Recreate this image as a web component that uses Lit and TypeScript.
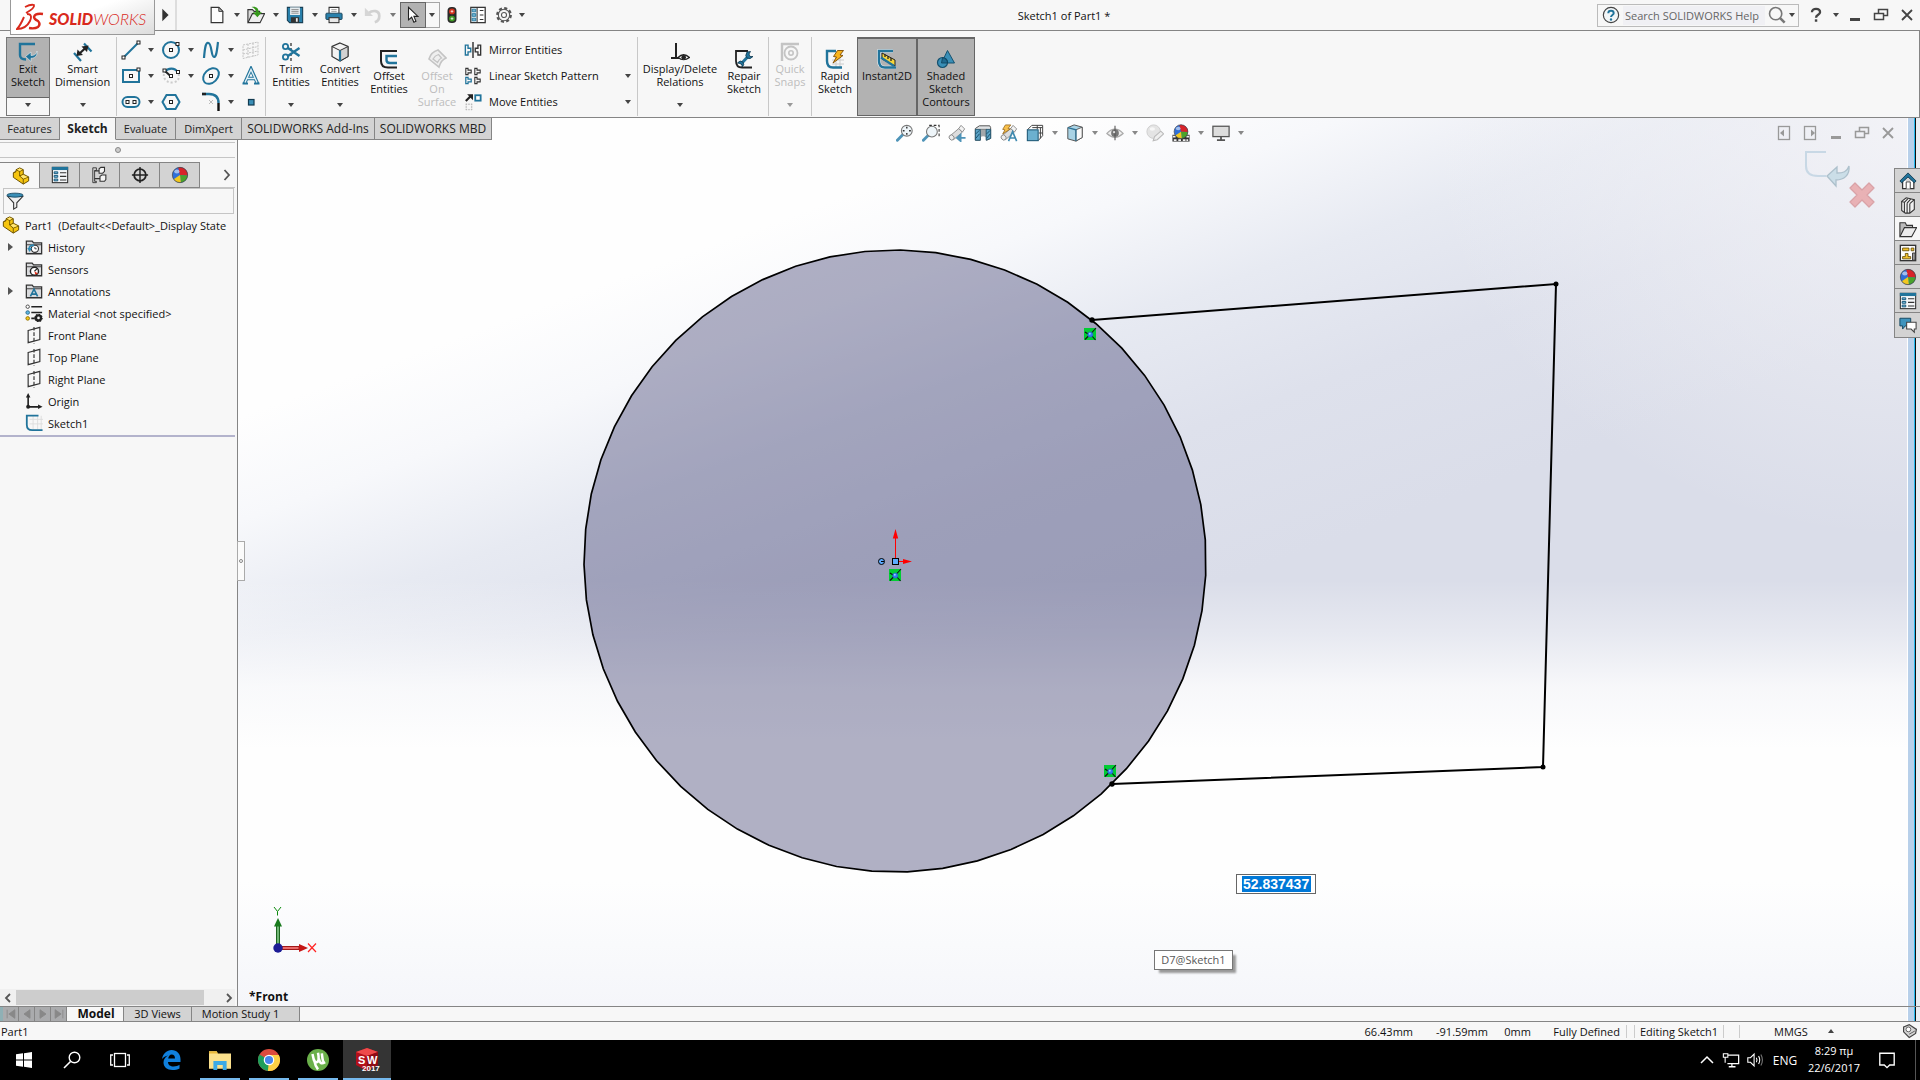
import { LitElement, html, svg, css, nothing } from "lit";
import { customElement, state } from "lit/decorators.js";

/* ---------- icon set, every glyph drawn on a 20 x 20 grid ---------- */

const B = "#21749b";
const K = "#333";

const ball = svg`
  <circle cx="10" cy="10" r="8.5" fill="#2f6fd8"/>
  <path d="M10 10 L8 1.7 A8.5 8.5 0 0 1 18.5 10.5 Z" fill="#d8232a"/>
  <path d="M10 10 L18.5 10.5 A8.5 8.5 0 0 1 11 18.4 Z" fill="#4aa32c"/>
  <path d="M10 10 L11 18.4 A8.5 8.5 0 0 1 3 14.8 Z" fill="#f2c81e"/>
  <ellipse cx="6.5" cy="6" rx="3" ry="2.2" fill="#fff" opacity=".55"/>
  <circle cx="10" cy="10" r="8.5" fill="none" stroke="#444" stroke-width=".8"/>`;

const folder = svg`
  <path d="M1.5 3.5 V17.5 H18.5 V5.5 H9.5 L8 3.5 Z" fill="#d9dadc" stroke="${K}" stroke-width="1.4"/>
  <path d="M2 7.5 H18" stroke="${K}"/>`;

const part = svg`
  <path d="M1.5 11.5 L1.5 6.5 L4.5 5 V3 L8.5 1 L12.5 3 V8 L18.5 11 V15.5 L12.5 19 Z" fill="#f6c50f" stroke="#6b5100" stroke-width="1.1" stroke-linejoin="round"/>
  <path d="M4.5 3 L8.5 5 V10 M8.5 5 L12.500 3 M1.5 6.5 L4.5 5 M8.5 10 L12.5 8 M8.500 10 L12.5 13.500 V19 M12.5 13.5 L18.5 11" fill="none" stroke="#6b5100" stroke-width="1"/>
  <path d="M5.6 3 L8.5 1.700 L11.400 3 L8.5 4.400 Z M9.700 10.200 L12.500 8.800 L17.200 11 L12.700 12.900 Z" fill="#ffe678"/>`;

const plane = svg`
  <path d="M3.5 5 L16.5 1.5 V15 L3.5 18.5 Z" fill="none" stroke="${K}" stroke-width="1.3"/>
  <path d="M10 1 V19.500" stroke="${K}" stroke-width="1.3" stroke-dasharray="4 2"/>`;

const table = svg`
  <rect x="1.5" y="1.5" width="17" height="17" fill="#f4f6f8" stroke="${K}" stroke-width="1.2"/>
  <rect x="1" y="1" width="18" height="3.5" fill="${B}"/>
  <path d="M10 7.5 H17 M10 11.5 H17 M10 15.5 H17" stroke="${K}" stroke-width="1.2"/>
  <path d="M3.5 6.5 h4 v2 h-4z M3.5 10.5 h4 v2 h-4z M3.5 14.5 h4 v2 h-4z" fill="#7fc4e4" stroke="#0f4f73" stroke-width="1"/>`;

const dot = (x: number, y: number) =>
  svg`<rect x="${x - 1.5}" y="${y - 1.5}" width="3" height="3" fill="#fff" stroke="#222" stroke-width="1"/>`;

const scope = svg`
  <path d="M2.5 13 L12 5 L16 9 L6 17.5 Z" fill="#ddd" stroke="#888" stroke-width="1"/>
  <path d="M12 5 L14.5 1.5 L18.5 5.5 L16 9 Z" fill="#f3f3f3" stroke="#888" stroke-width="1"/>
  <ellipse cx="4" cy="15" rx="2.6" ry="3" fill="#eee" stroke="#888" transform="rotate(-40 4 15)"/>`;

const loupe = (cx: number, cy: number) => svg`
  <path d="M${cx - 4} ${cy + 4} L1.5 18" stroke="#4f94b8" stroke-width="3.2" stroke-linecap="round"/>
  <circle cx="${cx}" cy="${cy}" r="6" fill="#eef5f9" stroke="#777" stroke-width="1.2"/>`;

const ICONS: Record<string, unknown> = {
  play: svg`<path d="M7 3 L14 10 L7 17 Z" fill="#333"/>`,
  fresh: svg`<path d="M3.5 1.5 H12 L16.5 6 V18.5 H3.5 Z" fill="#fdfdfd" stroke="${K}" stroke-width="1.3"/><path d="M12 1.5 V6 H16.5 Z" fill="#bbb" stroke="${K}"/>`,
  open: svg`<path d="M1 18 V4 H6 L8 6 H14 V9" fill="#dadada" stroke="${K}" stroke-width="1.2"/><path d="M1 18.5 L6 8.5 H19.5 L14.5 18.5 Z" fill="#eee" stroke="${K}" stroke-width="1.2"/><path d="M5 1 C10 0 13 2 13 7 H16.5 L11.5 12.5 L6.5 7 H10 C10 4 8 2 5 1Z" fill="#35981a"/>`,
  save: svg`<path d="M1.5 1.5 H18.5 V18.5 H4 L1.5 16 Z" fill="#2980ab" stroke="#173f55" stroke-width="1.2"/><rect x="4.5" y="1.5" width="11" height="8.5" fill="#e6ecef"/><path d="M6 4 H14 M6 6 H14 M6 8 H14" stroke="#888"/><rect x="5.5" y="12.5" width="9" height="6" fill="#333"/><rect x="11" y="13.5" width="2" height="4" fill="#eee"/>`,
  print: svg`<path d="M4.5 8 V1.5 H15.5 V8" fill="#fff" stroke="${K}" stroke-width="1.2"/><path d="M7 4 H13 M7 6 H13" stroke="#999"/><rect x="1" y="8" width="18" height="7" rx="1" fill="#2980ab" stroke="#173f55"/><rect x="4.5" y="13" width="11" height="5.5" fill="#e9e9e9" stroke="${K}" stroke-width="1.2"/>`,
  undo: svg`<path d="M5 8 C10 4 17 5 17 11 C17 14 15 17 12 18" fill="none" stroke="#c2c2c2" stroke-width="3"/><path d="M1 2 V11 H10 Z" fill="#c9c9c9"/>`,
  cursor: svg`<path d="M5 1.5 V15.5 L8.5 12.5 L11 18 L13.3 17 L11 11.5 H15.5 Z" fill="#fff" stroke="#222" stroke-width="1.2"/>`,
  traffic: svg`<rect x="5" y="1" width="10" height="18" rx="4.5" fill="#2a2a2a"/><circle cx="10" cy="6" r="3.3" fill="#d4321d"/><circle cx="10" cy="14" r="3.3" fill="#3f9a22"/><path d="M8.5 6 h3 M10 4.5 v3 M8.5 14 h3 M10 12.5 v3" stroke="#fff" stroke-width=".8"/>`,
  options: svg`<rect x="2" y="1.5" width="16" height="17" fill="#fff" stroke="${K}" stroke-width="1.4"/><path d="M9 1.5 V18.5 M12 5 H16 M12 10 H16 M12 15 H16" stroke="${K}" stroke-width="1.2"/><path d="M3.5 3.5 h4 v3 h-4z M3.5 8.5 h4 v3 h-4z M3.5 13.5 h4 v3 h-4z" fill="#74b6d4" stroke="${B}"/>`,
  gear: svg`<circle cx="10" cy="10" r="7.5" fill="none" stroke="#555" stroke-width="2.6" stroke-dasharray="3.4 2.49"/><circle cx="10" cy="10" r="6.3" fill="#f4f4f4" stroke="#555" stroke-width="1.2"/><circle cx="10" cy="10" r="2.8" fill="#fff" stroke="#555" stroke-width="1.2"/>`,
  help: svg`<circle cx="10" cy="10" r="8.5" fill="#f2f6f8" stroke="#444" stroke-width="1.3"/><path d="M7 8 C7 4.5 13 4.5 13 8 C13 10 10 10 10 12.3" fill="none" stroke="${B}" stroke-width="2.2"/><circle cx="10" cy="15" r="1.3" fill="${B}"/>`,
  lens: svg`<circle cx="8.5" cy="8.5" r="6.8" fill="none" stroke="#777" stroke-width="1.8"/><path d="M13.5 13.5 L18.5 18.5" stroke="#777" stroke-width="2.8"/>`,
  query: svg`<path d="M5.5 7 C5.5 2 14.5 2 14.5 7 C14.5 10 10 9.5 10 13" fill="none" stroke="#444" stroke-width="2.6"/><rect x="8.7" y="14.8" width="2.7" height="2.7" fill="#444"/>`,
  min: svg`<rect x="5" y="13" width="10" height="3" fill="currentColor"/>`,
  restore: svg`<path d="M7.5 8 V4.5 H16.5 V10.5 H13" fill="none" stroke="currentColor" stroke-width="1.5"/><rect x="3.5" y="8.5" width="9" height="6" fill="none" stroke="currentColor" stroke-width="1.5"/>`,
  close: svg`<path d="M5 5 L15 15 M15 5 L5 15" stroke="currentColor" stroke-width="1.8"/>`,
  dockL: svg`<rect x="4.5" y="3.5" width="11" height="13" fill="none" stroke="currentColor" stroke-width="1.3"/><path d="M10 6.5 V13.5 L6 10 Z" fill="currentColor"/>`,
  dockR: svg`<rect x="4.5" y="3.5" width="11" height="13" fill="none" stroke="currentColor" stroke-width="1.3"/><path d="M11 6.5 V13.5 L15 10 Z" fill="currentColor"/>`,

  exit: svg`<path d="M17 2 H2 V13 Q2 17.5 8 17.5" fill="none" stroke="${B}" stroke-width="2.4"/><path d="M19 9 C18.5 12.5 16 13.5 13 13.5 V10 L7.5 14.5 L13 19.5 V16.3 C17 16.3 19.8 13.5 19 9Z" fill="${B}" stroke="#e7eef2" stroke-width=".6"/>`,
  smart: svg`<path d="M1 11 L8 19 M11 1.5 L18.5 9.5" stroke="${B}" stroke-width="2.2"/><path d="M6 12 L13 5.5" stroke="#222" stroke-width="2.2"/><path d="M3.5 14 L4.5 7.5 L10 13 Z M15.5 3.5 L14 10 L8.5 4.5 Z" fill="#222"/>`,
  line: svg`<path d="M3 17 L17 3" stroke="${B}" stroke-width="2"/>${dot(2.5, 17.5)}${dot(17.5, 2.5)}`,
  circle: svg`<circle cx="10" cy="10" r="8" fill="none" stroke="${B}" stroke-width="2"/>${dot(10, 10)}${dot(16.5, 4)}`,
  spline: svg`<path d="M3 18 C4 6 5 2 7.5 3 C11 4 10 17 13 17 C15.5 17 16 10 17 2" fill="none" stroke="${B}" stroke-width="2.2"/>`,
  grid: svg`<path d="M2 5 L17 2 V15 L2 18.5 Z M7 4 V17.5 M12 3 V16.5 M2 10 L17 6.5 M2 14 L17 11" fill="none" stroke="#c4c4c4" stroke-width="1" stroke-dasharray="2 1"/>`,
  rect: svg`<rect x="2" y="4" width="16" height="12" fill="none" stroke="${B}" stroke-width="2"/>${dot(10, 10)}${dot(17.5, 3.5)}`,
  arc: svg`<path d="M3 8 A8 7 0 0 0 17 14 A8 8 0 0 0 17.5 8" fill="none" stroke="#ccc" stroke-width="2" stroke-dasharray="2 2"/><path d="M3.5 6 C7 1.5 14 1.5 16.5 6" fill="none" stroke="${B}" stroke-width="2.2"/><path d="M4 5 L10 10.5" stroke="#222" stroke-width="2"/>${dot(3.5, 4.5)}${dot(10, 10)}${dot(17, 6)}`,
  ellipse: svg`<ellipse cx="10" cy="10" rx="9" ry="6.5" fill="none" stroke="${B}" stroke-width="2" transform="rotate(-45 10 10)"/>${dot(10, 10)}`,
  letter: svg`<path d="M3.5 17.5 L10 3 L16.5 17.5 M6 12.5 H14" fill="none" stroke="${B}" stroke-width="3.4"/><path d="M1.5 17.5 H7 M13 17.5 H18.5" stroke="${B}" stroke-width="2"/><path d="M4 16.5 L10 3.5 L16 16.5 M6.5 12.5 H13.5" fill="none" stroke="#e3f0f6" stroke-width="1.4"/>`,
  slot: svg`<rect x="1.5" y="5" width="17" height="10" rx="5" fill="none" stroke="${B}" stroke-width="2"/>${dot(6.5, 10)}${dot(13.5, 10)}`,
  polygon: svg`<path d="M5.5 3 H14.5 L18.5 10 L14.5 17 H5.5 L1.5 10 Z" fill="none" stroke="${B}" stroke-width="2"/>${dot(10, 10)}`,
  fillet: svg`<path d="M1 2 H8 Q17.5 2 17.5 11" fill="none" stroke="${B}" stroke-width="2.4"/><path d="M1 2 H5" stroke="#222" stroke-width="2.4"/><path d="M17.5 11 V19" stroke="#111" stroke-width="2.4"/><path d="M8 8 L12 12 M12 8 L8 12" stroke="#bbb"/>`,
  point: svg`<rect x="7.5" y="7.5" width="5.5" height="5.5" fill="#3a8fb7" stroke="#123a50" stroke-width="1.2"/>`,
  trim: svg`<path d="M10 1 V19" stroke="#222" stroke-width="1.2" stroke-dasharray="3 2"/><path d="M4 4 L18.5 14 M4 16 L18.5 6" stroke="${B}" stroke-width="2.4"/><circle cx="4.5" cy="4.5" r="2.6" fill="#f7f7f7" stroke="${B}" stroke-width="1.8"/><circle cx="4.5" cy="15" r="2.6" fill="#f7f7f7" stroke="${B}" stroke-width="1.8"/>`,
  convert: svg`<path d="M10 1 L18 4.5 V14.5 L10 19 L2 14.5 V4.5 Z" fill="#f3f3f3" stroke="${K}" stroke-width="1.2"/><path d="M10 8.5 L18 4.5 V14.5 L10 19 Z" fill="#d2d2d2" stroke="${K}"/><path d="M2 4.5 L10 8.5" stroke="${K}"/><path d="M10 8.5 V19" stroke="${B}" stroke-width="2.2"/>`,
  offset: svg`<path d="M18 2 H2 V12 Q2 18.5 9 18.5 H18" fill="none" stroke="#222" stroke-width="2"/><path d="M18 7 H7.5 V11 Q7.5 14 11 14 H18" fill="none" stroke="${B}" stroke-width="2.4"/>`,
  surface: svg`<path d="M2 10 Q4 3 11 1 L19 9 Q14 11 12 18 Z" fill="#efefef" stroke="#c4c4c4" stroke-width="1.6"/><path d="M6 10 Q8 6.5 11.5 5.5 L14.5 9 Q12 10 10.5 13.5 Z" fill="none" stroke="#c4c4c4" stroke-width="1.3"/>`,
  mirror: svg`<path d="M10 1 V19" stroke="#222" stroke-width="1.5"/><path d="M1.5 4.5 H4.5 V8 H7.5 V12 H4.5 V15.5 H1.5 Z" fill="none" stroke="${B}" stroke-width="1.5"/><path d="M18.5 4.5 H15.5 V8 H12.5 V12 H15.5 V15.5 H18.5 Z" fill="none" stroke="${K}" stroke-width="1.5"/>`,
  pattern: svg`<path d="M2 1.5 H4.5 V3.5 H8 V6.5 H4.5 V8.5 H2 Z M12 1.5 H14.5 V3.5 H18 V6.5 H14.5 V8.5 H12 Z M12 11.5 H14.5 V13.5 H18 V16.5 H14.5 V18.5 H12 Z" fill="none" stroke="${K}" stroke-width="1.2"/><path d="M2 11.5 H4.5 V13.5 H8 V16.5 H4.5 V18.5 H2 Z" fill="none" stroke="${B}" stroke-width="1.4"/>`,
  move: svg`<path d="M2 9 L7 4" stroke="#222" stroke-width="2.4"/><path d="M3.5 1.5 H10 V8 Z" fill="#222"/><rect x="12.5" y="2.5" width="6" height="6" fill="#fff" stroke="${B}" stroke-width="2"/><path d="M2 12.5 h7 M2 18.5 h7 M2.5 12 v7 M8.5 12 v7" stroke="#bbb" stroke-width="1.5" stroke-dasharray="1.5 1.3"/>`,
  relations: svg`<path d="M6 1 V15" stroke="#222" stroke-width="2"/><path d="M1 16 H10" stroke="#222" stroke-width="2"/><path d="M8 15.5 Q13.5 10 19.5 15.5 Q13.5 20 8 15.5Z" fill="#f4f4f4" stroke="#222" stroke-width="1.2"/><circle cx="13.7" cy="15.3" r="2.3" fill="#222"/>`,
  repair: svg`<path d="M14 2 H2 V12 Q2 18.5 8 18.5 H18" fill="none" stroke="#222" stroke-width="1.8"/><path d="M7 15 L14 7.5" stroke="${B}" stroke-width="3"/><path d="M13 3 Q10.5 7 13 9 Q16 11 19 7.5 L16 7.5 L15 5 L16.5 2.5 Z M3.5 14 Q6 10.5 9 13 Q11 16 8 18 L8 15.8 L6 14.5 Z" fill="${B}" stroke="#123a50" stroke-width=".8"/>`,
  snaps: svg`<path d="M1 2 H19 M2 1 V19" stroke="#c4c4c4" stroke-width="2.4"/><circle cx="11" cy="11" r="6.5" fill="none" stroke="#c4c4c4" stroke-width="1.8"/><circle cx="11" cy="11" r="2.2" fill="none" stroke="#c4c4c4" stroke-width="1.6"/>`,
  rapid: svg`<path d="M7 11 H19 M7 15 H19 M11 7 V19 M15 7 V19" stroke="#ccc"/><path d="M11 2 H2 V12 Q2 18.5 8 18.5 H17" fill="none" stroke="${B}" stroke-width="2.4"/><path d="M12.5 1.5 L18.5 1.5 L15 6 L18 6.5 L8 14 L11.5 8 L8.5 7.5 Z" fill="#f8b31a" stroke="#7a4a00" stroke-width=".9"/>`,
  instant: svg`<path d="M16 2 H2 V12 Q2 18.5 8 18.5 H19" fill="none" stroke="#e4eaee" stroke-width="3.6"/><path d="M16 2 H2 V12 Q2 18.5 8 18.5 H19" fill="none" stroke="${B}" stroke-width="2.4"/><path d="M5 4 L18 11 V17 L5 10 Z" fill="#f6d53a" stroke="#222" stroke-width="1"/><path d="M8 5.6 V8 M11 7.2 V10 M14 9 V12" stroke="#222" stroke-width="1.3"/><path d="M4 8.5 L17 17" stroke="${B}" stroke-width="2.2"/>`,
  shaded: svg`<path d="M11.5 1.5 L18.5 14 H5.5 Z" fill="#3a8fb7" stroke="#15516f" stroke-width="1"/><circle cx="6.5" cy="13.5" r="5" fill="#3a8fb7" stroke="#15516f" stroke-width="1.2"/><path d="M6.5 8.7 L5.5 14 H11.5 C11.5 11 9.5 9 6.5 8.7Z" fill="#206a90" stroke="#0e3f58" stroke-width=".8"/>`,

  zoomFit: svg`${loupe(12, 7.5)}<path d="M12 3 v2 M12 10 v2 M7.5 7.5 h2 M14.5 7.5 h2" stroke="#333" stroke-width="1.6"/>`,
  zoomArea: svg`<path d="M8 1.5 H19 V14" fill="none" stroke="#333" stroke-width="1.2" stroke-dasharray="3 2"/>${loupe(11, 8.5)}`,
  previous: svg`${scope}<path d="M19.5 15.5 H12 M14 12 L10 15.5 L14 19 Z" fill="#4f94b8" stroke="#4f94b8" stroke-width="2"/>`,
  section: svg`<path d="M1.5 5 L6 2 H17.5 L18.5 4 V16 L14 18 V6 H7 V18 H1.5 Z" fill="#dfe2e4" stroke="#555" stroke-width="1.1"/><path d="M7 6 H13.5 V15 Q10 12 7 15 Z" fill="#a3a8ab"/><path d="M1.5 6 H7 V18 H1.5 Z M13.5 6 H18.5 V16 L13.5 18 Z" fill="#5ba4c7" stroke="#26566d"/><path d="M2 11 L6 7 M2 16 L6 11 M14 11 L18 7 M14 16 L18 11" stroke="#174a64"/>`,
  dynamic: svg`${scope}<path d="M6 1 L12 1 L9 5 L11.5 5.5 L3 11 L5.5 6.5 L3 6 Z" fill="#f8c04a" stroke="#8a5a10" stroke-width=".8"/><path d="M9.5 19 L14 8.5 L18.5 19 M11 15.5 H17" fill="none" stroke="#3f8ab0" stroke-width="1.8"/>`,
  orient: svg`<path d="M1.5 6.5 L6.5 1.5 H18.5 V13 L13.5 18.5 M12.5 1.5 V6 M7 4 H18 M16 4 V16 M14 10 H18.5" fill="none" stroke="#444" stroke-width="1.1"/><rect x="1.5" y="6.5" width="12" height="12" fill="#6cb0cf" stroke="#1f5a78" stroke-width="1.2"/>`,
  style: svg`<path d="M2 4 L9 1 L18 3.5 V15 L11 19 L2 16.5 Z" fill="#a9d3e5" stroke="#555" stroke-width="1.1"/><path d="M11 6.5 L18 3.5 V15 L11 19 Z" fill="#fafafa" stroke="#555"/><path d="M2 4 L11 6.5 V19" fill="none" stroke="#2d7397" stroke-width="1.4"/>`,
  eye: svg`<path d="M1 10.5 Q10 1 19 10.5 Q10 19 1 10.5 Z" fill="#eee" stroke="#aaa" stroke-width="1.3"/><circle cx="10" cy="10" r="4.3" fill="#777"/><path d="M10 2 V18" stroke="#555" stroke-width="1.2"/><circle cx="9" cy="9" r="1.3" fill="#ddd"/>`,
  appearance: svg`<circle cx="8.5" cy="8.5" r="7.5" fill="#e4e4e4" stroke="#ccc"/><ellipse cx="7" cy="5.5" rx="3" ry="2" fill="#f7f7f7"/><path d="M8 18.5 L9.5 14 L16.5 8 L19.5 11 L12.5 17.5 Z" fill="#efefef" stroke="#bbb" stroke-width="1.2"/>`,
  scene: svg`<rect x=".5" y="12" width="19" height="7.5" fill="#333"/><path d="M1 13 h3 v2 h-3z M7 17 h3 v2 h-3z M12 17 h3 v2 h-3z M2 17 h3 v2 h-3z M16 13 h3 v2 h-3z M16 17 h2 v2 h-2z" fill="#eee"/><g transform="translate(1 -.5) scale(.9)">${ball}</g>`,
  monitor: svg`<rect x="1" y="2.5" width="18" height="11.5" fill="#ddd" stroke="#555" stroke-width="1.4"/><path d="M10 14 V17 M5.5 18 H14.5" stroke="#555" stroke-width="2"/>`,

  home: svg`<path d="M4 10 V18.5 H16.5 V10" fill="#fff" stroke="${K}" stroke-width="1.4"/><path d="M10 1 L19 10 L17 12 L10 5.5 L3 12 L1 10 Z" fill="${B}" stroke="#123a50"/><path d="M8 18.5 V11 H12.5 V18.5" fill="#fff" stroke="${K}"/>`,
  books: svg`<path d="M3 6 L8 2 L17 4 V15 L12 19 L7 19 L3 16 Z" fill="#f1f1f1" stroke="${K}" stroke-width="1.2"/><path d="M3 6 L6 7 V18 M6 7 L10 3 M9 8 V19 M9 8 L13 3.5 M12 8.5 V19 M12 8.5 L17 4" fill="none" stroke="${K}" stroke-width="1.2"/>`,
  openFolder: svg`<path d="M1 18 V3 H7 L8.5 6 H15 V9" fill="#bbb" stroke="${K}" stroke-width="1.2"/><path d="M1 18.5 L6 8.5 H19.5 L14 18.5 Z" fill="#ececec" stroke="${K}" stroke-width="1.2"/>`,
  palette: svg`<rect x="1.5" y="1.5" width="17" height="17" fill="#fff" stroke="${K}" stroke-width="1.5"/><path d="M4 4.5 h7 v3 h-7z M13.5 4.5 h3 v3 h-3z M4 14 h3 v-3.5 h3 v3.5 h3 v2.5 h-9z" fill="#f2c230" stroke="#5c4600" stroke-width=".9"/><path d="M15 10 h3 v8 h-3z" fill="#999" stroke="${K}"/>`,
  ball,
  table,
  forum: svg`<path d="M1 2.5 H13 V11 H7 L4 14.5 V11 H1 Z" fill="#3f94bd" stroke="#174a64" stroke-width="1.1"/><path d="M8.5 7 H19 V14.5 H17 V18 L13.5 14.5 H8.5 Z" fill="#fff" stroke="#444" stroke-width="1.2"/>`,

  part,
  config: svg`<path d="M2 2 h4 v3 h-2 v12 h2 v1.5 h-4z" fill="none" stroke="${K}"/><path d="M4 5.5 H9 M4 14 H10" stroke="${K}" stroke-width="1.4"/><path d="M9 3 L11 1.5 H15 V6 L13 8 H9 Z M10 11.5 L12 10 H16.5 V15 L15 17 H10 Z" fill="#f6f6f6" stroke="${K}" stroke-width="1.2"/>`,
  target: svg`<circle cx="10" cy="10" r="6.5" fill="none" stroke="#222" stroke-width="2"/><path d="M10 1 V19 M1 10 H19" stroke="#222" stroke-width="1.6"/>`,
  funnel: svg`<path d="M2 5 L8.5 12 V19 L12 17 V12 L18.5 5 Z" fill="#f0f0f0" stroke="${K}" stroke-width="1.2"/><ellipse cx="10" cy="3.5" rx="9" ry="2.2" fill="#3a8fb7" stroke="#174a64"/>`,
  history: svg`${folder}<circle cx="11" cy="12" r="4" fill="#fff" stroke="${K}" stroke-width="1.2"/><path d="M11 10 V12 H13" stroke="${K}" fill="none"/><path d="M4.5 12 C5 8 8 7.5 10 8.5" fill="none" stroke="#2f8ab4" stroke-width="2"/><path d="M2.5 11 H8 L5 15.5 Z" fill="#2f8ab4"/>`,
  sensors: svg`${folder}<circle cx="10.5" cy="12.5" r="4.5" fill="#fff" stroke="#222" stroke-width="1.6"/><path d="M10.5 12.5 L13.5 9.5" stroke="#222" stroke-width="1.3"/><path d="M10.5 12.5 L14.5 15 L11.5 16.5Z" fill="#e0341e"/>`,
  notes: svg`${folder}<path d="M6 16 L10 8 L14 16 M7.5 13.5 H12.5" fill="none" stroke="${B}" stroke-width="1.8"/>`,
  material: svg`<circle cx="3" cy="3" r="1.9" fill="#fff" stroke="#444"/><circle cx="3" cy="9.5" r="2" fill="#5db4e0" stroke="#2a6a8a"/><circle cx="3" cy="16" r="2" fill="#f4c81c" stroke="#8f7000"/><path d="M7 3 H19 M7 9.5 H19 M7 16 H11" stroke="#222" stroke-width="1.8"/><circle cx="15" cy="15.5" r="2.8" fill="none" stroke="#222" stroke-width="2.6"/><circle cx="15" cy="15.5" r="4" fill="none" stroke="#222" stroke-width="1.4" stroke-dasharray="1.6 1.5"/>`,
  plane,
  origin: svg`<path d="M3.5 5 V16.5 H15" fill="none" stroke="#222" stroke-width="1.8"/><path d="M3.5 1 L6 6 H1 Z M19.5 16.5 L14.5 19 V14 Z" fill="#222"/><circle cx="3.5" cy="16.5" r="2.2" fill="#222"/>`,
  sketch: svg`<path d="M5 6 H20 M5 11 H20 M9 2 V17 M14 2 V17 M18 2 V17" stroke="#ddd"/><path d="M15 1.8 H2 V12 Q2 18 8 18 H19.5" fill="none" stroke="${B}" stroke-width="2"/>`,

  windows: svg`<path d="M2 4.3 L9 3.3 V9.5 H2 Z M10 3.2 L18 2 V9.5 H10 Z M2 10.5 H9 V16.7 L2 15.7 Z M10 10.5 H18 V18 L10 16.8 Z" fill="#fff"/>`,
  search: svg`<circle cx="12.5" cy="7.5" r="5.3" fill="none" stroke="#fff" stroke-width="1.4"/><path d="M8.5 11.5 L2 18" stroke="#fff" stroke-width="1.6"/>`,
  tasks: svg`<rect x="4.5" y="3.5" width="11" height="13" fill="none" stroke="#fff" stroke-width="1.3"/><path d="M3 5 H.7 V15 H3 M17 5 H19.3 V15 H17" fill="none" stroke="#fff" stroke-width="1.3"/>`,
  edge: svg`<path d="M1 9 C2 3.5 6 0 10.5 0 C16 0 19.5 4 19.5 9 V12 H7 C7 15 9.5 16.5 12.5 16.5 C15 16.5 17 15.7 18.5 14.8 V18.5 C16.5 19.6 14 20 11.5 20 C6 20 2.5 17 2.5 12.5 C2.5 9.5 4.3 7 7 5.5 C4.5 5.9 2.5 7 1 9 Z M7.2 8.5 H14 C14 6 12.8 4.5 10.7 4.5 C8.8 4.5 7.5 6.2 7.2 8.5Z" fill="#1080dd" fill-rule="evenodd"/>`,
  explorer: svg`<path d="M0 2 H7 L8 4 H20 V18 H0 Z" fill="#fbe08c"/><path d="M0 2 H7 L8 4 H0 Z" fill="#e9b83a"/><path d="M4 19 V11 H16 V19 H12.5 V14.5 H7.5 V19 Z" fill="#3ba9e6"/>`,
  chrome: svg`<circle cx="10" cy="10" r="10" fill="#dd4b3e"/><path d="M10 10 L1.3 5 A10 10 0 0 0 9 19.95 L13.5 12.5Z" fill="#1e9e5a"/><path d="M10 10 L9 19.95 A10 10 0 0 0 18.9 5.5 H10Z" fill="#fcd045"/><circle cx="10" cy="10" r="4.8" fill="#fff"/><circle cx="10" cy="10" r="3.7" fill="#4886ec"/>`,
  utorrent: svg`<circle cx="10" cy="10" r="10" fill="#6ab04a"/><path d="M5 4.5 C6 9 6 12 8.5 12 C11 12 11 8 10 3.5 M6.5 10 C7 13 8 16 10 18.5 M10.8 9 C12 14 14 13.5 16.5 12 M13.5 4 C14 8 14 11 15.5 12.5" fill="none" stroke="#fff" stroke-width="2.3"/>`,
  chevUp: svg`<path d="M4 13 L10 7 L16 13" fill="none" stroke="#fff" stroke-width="1.5"/>`,
  network: svg`<path d="M5 4.5 H18.5 V14 H6 M11 14 V17.5 M7.5 17.5 H15" fill="none" stroke="#fff" stroke-width="1.4"/><path d="M1.5 3 h5 v4 h-5z M3.5 7 v6" fill="#000" stroke="#fff" stroke-width="1.2"/>`,
  sound: svg`<path d="M2 7.5 H5 L9 3.5 V16.5 L5 12.5 H2 Z" fill="none" stroke="#fff" stroke-width="1.2"/><path d="M11.5 7.5 Q13 10 11.5 12.5 M14 5.5 Q16.5 10 14 14.5" fill="none" stroke="#fff" stroke-width="1.2"/><path d="M16.5 4 Q20 10 16.5 16" fill="none" stroke="#777" stroke-width="1.2"/>`,
  notice: svg`<path d="M2 2.5 H18 V15.5 H13 L10 18.5 L7 15.5 H2 Z" fill="none" stroke="#fff" stroke-width="1.5"/>`,
  tag: svg`<path d="M2 5 L9 2 L18 8 L17 13 L9 18 L2 11 Z" fill="#d6d6d6" stroke="#444" stroke-width="1.5"/><circle cx="8" cy="8" r="3" fill="#fff" stroke="#444"/><path d="M9 14 L16 10" stroke="#444"/>`,
};

const icon = (name: string, size = "") =>
  html`<svg class="ico ${size}" viewBox="0 0 20 20" aria-hidden="true">${ICONS[name]}</svg>`;

const caret = html`<svg class="caret" viewBox="0 0 6 4" aria-hidden="true"><path d="M0 0 H6 L3 4 Z" fill="currentColor"/></svg>`;

/* ---------- sketch geometry ---------- */

const CX = 895;
const CY = 561;
const R = 311;

/* The circle is shown as a fixed number of chords; the first vertex sits just past twelve o'clock. */
const CHORDS = 55;
const DISC = Array.from({ length: CHORDS }, (_, i) => {
  const a = ((1 + (360 * i) / CHORDS) * Math.PI) / 180;
  return `${(CX + R * Math.sin(a)).toFixed(1)},${(CY - R * Math.cos(a)).toFixed(1)}`;
}).join(" ");

const relation = (x: number, y: number) => svg`
  <g transform="translate(${x} ${y})">
    <rect width="12" height="12" fill="#00cc33"/>
    <path d="M1 11.5 L5 7.5 M7.5 5 L12 0 M7 7 L11.5 12 M1 4 L4 6" stroke="#111" stroke-width="1.1"/>
    <circle cx="6.3" cy="6.5" r="2.6" fill="#2f7bf0" stroke="#2563c4" stroke-width=".6"/>
    <circle cx="5.8" cy="5.8" r="1" fill="#9cf"/>
  </g>`;

interface Tool { icon: string; lines: string[]; kind?: string; drop?: boolean; w: string; }
interface TreeNode { icon: string; label: string; branch?: boolean; }

@customElement("app-root")
export class AppRoot extends LitElement {
  @state() private tab = "Sketch";

  static styles = css`
    :host {
      display: flex; flex-direction: column; min-height: 100vh; background: #f7f7f7; color: #111;
      font: 12px/13px "Open Sans", "Noto Sans", sans-serif; overflow: hidden;
    }
    * { box-sizing: border-box; }
    button, input { font: inherit; color: inherit; border: 0; background: none; padding: 0; margin: 0; border-radius: 0; outline: 0; }
    button { display: flex; align-items: center; justify-content: center; white-space: nowrap; flex: none; }
    ul { list-style: none; margin: 0; padding: 0; }
    svg { display: block; flex: none; }
    .ico { width: 18px; height: 18px; }
    .ico.s16 { width: 16px; height: 16px; }
    .ico.s20 { width: 20px; height: 20px; }
    .ico.s22 { width: 22px; height: 22px; }
    .caret { width: 6px; height: 4px; color: #444; }

    /* title bar */
    .title { display: flex; align-items: center; height: 31px; border-bottom: 1px solid #858585; }
    .logo {
      align-self: flex-start; display: flex; align-items: center; gap: 5px; width: 145px; height: 35px; margin-left: 10px; padding: 0 5px;
      border: 1px solid #999; border-top: 0; z-index: 2; color: #d9291c; flex: none;
      background: linear-gradient(160deg, #fff 45%, #dcdcdc); font: italic 300 16px/20px Lato, sans-serif;
    }
    .logo b { font-weight: 900; }
    .logo svg { width: 28px; height: 28px; }
    .logo span { padding-top: 4px; }
    .expand { width: 22px; height: 30px; border-right: 2px solid #ddd; margin-right: 26px; }
    .quick { display: flex; align-items: center; height: 26px; }
    .quick button { width: 28px; height: 26px; }
    .quick .more { width: 11px; }
    .quick.picked { margin: 0 0 0 2px; width: 40px; border: 1px solid #a5a5a5; }
    .quick.picked .pick { width: 26px; height: 26px; background: #b2b2b2; border: 1px solid #666; margin-left: -1px; }
    .quick .slim { width: 24px; }
    .quick.off { opacity: .7; }
    .doc { flex: 1; margin: 0; padding-left: 4px; text-align: center; font: 11px/15px "Open Sans", "Noto Sans", sans-serif; }
    .find { display: flex; align-items: center; width: 202px; height: 23px; padding: 0 3px 0 4px; gap: 3px; border: 1px solid #bbb; color: #666; flex: none; }
    .find input { flex: 1; min-width: 0; height: 19px; background: #f0f0f4; padding: 0 2px; font-size: 11px; }
    .find input::placeholder { color: #666; opacity: 1; }
    .sys { display: flex; align-items: center; color: #444; margin-left: 4px; }
    .sys button { width: 26px; height: 26px; }
    .sys .more { width: 13px; }

    /* ribbon */
    .ribbon { display: flex; height: 87px; padding: 6px 0 1px 6px; border-bottom: 1px solid #858585; border-right: 1px solid #858585; font-size: 11px; }
    .tool { display: flex; flex-direction: column; align-items: center; justify-content: flex-start; height: 79px; padding-top: 5px; text-align: center; }
    .tool.low { padding-top: 12px; }
    .tool .caret { margin: auto 0 9px; }
    .tool.off { color: #bdbdbd; }
    .tool.off .caret { color: #999; }
    .tool.on { background: #b2b2b2; border: 1px solid #666; border-top-width: 2px; padding-top: 10px; }
    .tool.exit { background: linear-gradient(#b2b2b2 59px, #666 59px, #666 60px, #f7f7f7 60px); border: 1px solid #777; padding-top: 4px; }
    .tool.exit .caret { margin-bottom: 8px; }
    .tool span { display: block; }
    .w40 { width: 40px; } .w44 { width: 44px; } .w46 { width: 46px; } .w48 { width: 48px; } .w50 { width: 50px; } .w58 { width: 58px; } .w60 { width: 60px; } .w65 { width: 65px; } .w82 { width: 82px; }
    .rule { width: 1px; height: 79px; background: #c8c8c8; margin: 0 1px; flex: none; }
    .sketchers { display: grid; grid-template-columns: repeat(3, 24px 16px) 24px; grid-template-rows: repeat(3, 26px); margin: 0 1px; }
    .sketchers button { width: 100%; height: 100%; }
    .edits { display: grid; grid-template-rows: repeat(3, 26px); width: 175px; }
    .edits li { display: flex; align-items: center; justify-content: space-between; }
    .edits button { height: 26px; padding-bottom: 1px; }
    .edits .main { gap: 7px; padding-left: 3px; }
    .edits .more { width: 16px; }

    /* work area */
    .work { position: relative; flex: 1; display: grid; grid-template-columns: 238px 1fr 13px; background: #f7f7f7; }
    .tabs { position: absolute; left: 0; top: 0; z-index: 2; display: flex; height: 22px; }
    .tabs button { height: 22px; background: #d3d3d3; border: 1px solid #858585; border-width: 0 1px 1px 0; color: #222; }
    .tabs .w1 { width: 60px; } .tabs .w2 { width: 56px; } .tabs .w3 { width: 60px; } .tabs .w4 { width: 66px; } .tabs .w5 { width: 133px; } .tabs .w6 { width: 117px; }
    .tabs button.on { background: #f7f7f7; border-bottom-color: #f7f7f7; font-weight: 700; }
    .tabs .sm { font-size: 11px; }

    .panel { display: flex; flex-direction: column; margin-top: 22px; border-right: 1px solid #858585; padding-right: 2px; min-width: 0; }
    .grip { display: flex; align-items: center; justify-content: center; height: 16px; margin: 2px 0 4px; border: 1px solid #c5c5c5; border-width: 1px 0; }
    .grip i { width: 6px; height: 6px; border-radius: 3px; border: 1px solid #888; background: #ccc; }
    .modes { display: flex; height: 26px; }
    .modes button { width: 40px; height: 26px; background: #d3d3d3; border: 1px solid #858585; border-left-width: 0; }
    .modes button.on { background: #f7f7f7; border-bottom: 0; padding-left: 2px; }
    .modes .next { flex: 1; background: none; border-width: 0 0 1px; justify-content: flex-end; padding-right: 4px; border-color: #c5c5c5; }
    .filter { display: flex; align-items: center; gap: 4px; height: 26px; margin: 0 1px 0 3px; padding: 0 2px; border: 1px solid #c5c5c5; }
    .filter input { flex: 1; min-width: 0; height: 22px; }
    .tree { padding-bottom: 1px; border-bottom: 2px solid #b3b3cc; font-size: 11px; overflow: hidden; }
    .tree li { display: flex; align-items: center; height: 22px; padding-left: 6px; }
    .tree .twist { width: 8px; margin-right: 11px; height: 22px; }
    .tree .item { height: 22px; gap: 5px; }
    .tree .root { padding-left: 2px; }
    .fill { flex: 1; }
    .scroll { display: flex; align-items: center; height: 17px; background: #f0f0f0; color: #555; }
    .scroll button { width: 16px; height: 16px; }
    .scroll .fwd { width: 12px; }
    .scroll i { width: 188px; height: 15px; background: #cdcdcd; margin-right: auto; }

    .canvas {
      position: relative; min-width: 0;
      background:
        linear-gradient(to bottom, rgba(254,254,254,0) 52%, rgba(254,254,254,.35) 58%, rgba(254,254,254,.8) 64%, #fefefe 71%, #fefefe 86%, #f9fafc 93%, #f5f6fa 100%),
        radial-gradient(ellipse 480px 420px at 100% 0%, rgba(243,243,247,.95), rgba(236,238,245,0)),
        linear-gradient(160deg, #fefefe 20%, #f7f8fb 27%, #e7eaf2 35%, #dee1ec 44%, #dadde9 55%, #dadde9 100%);
    }
    .scene { position: absolute; inset: 0; width: 100%; height: 100%; }
    .views { position: absolute; left: 654px; top: 5px; display: flex; align-items: center; height: 20px; }
    .views button { width: 26px; height: 20px; }
    .views .more { width: 14px; }
    .views .caret { color: #888; }
    .docwin { position: absolute; right: 6px; top: 5px; display: flex; color: #999; }
    .docwin button { width: 26px; height: 20px; }
    .confirm { position: absolute; right: 31px; top: 31px; width: 72px; height: 60px; opacity: .8; }
    .handle { position: absolute; left: -1px; top: 423px; width: 8px; height: 40px; background: #fbfbfb; border: 1px solid #aaa; }
    .handle i { width: 4px; height: 4px; border-radius: 2px; border: 1px solid #888; }
    .front { position: absolute; left: 11px; bottom: 2px; margin: 0; font: 700 12px/15px "Open Sans", sans-serif; }
    .value { position: absolute; left: 998px; top: 756px; width: 80px; height: 20px; background: #fff; border: 1px solid #666; padding: 1px 4px 1px 5px; display: flex; }
    .value input { width: 69px; height: 16px; background: #0078d7; color: #fff; font: 700 14px/16px "Liberation Sans", sans-serif; padding-left: 1px; }
    .tip { position: absolute; left: 916px; top: 832px; width: 79px; height: 20px; background: #fff; border: 1px solid #767676; box-shadow: 4px 4px 2px -1px #999; color: #575757; line-height: 18px; font-size: 11px; text-align: center; }

    .edgebar { background: linear-gradient(to right, #fff 1px, #b8d0ea 1px, #b8d0ea 7px, #24b9ee 7px, #24b9ee 8px, #111 8px, #111 9px, #e9edf2 9px); }
    .pane { position: absolute; right: 0; top: 50px; z-index: 3; border: 1px solid #858585; border-right: 0; }
    .pane button { width: 25px; height: 24px; background: #d3d3d3; border-bottom: 1px solid #858585; }
    .pane button.on { background: #f7f7f7; }
    .pane li:last-child button { border-bottom: 0; }

    /* bottom rows */
    .sheets { display: flex; height: 16px; background: #f7f7f7; border: 1px solid #858585; border-width: 1px 0; }
    .sheets button { height: 14px; border-right: 1px solid #858585; background: #d3d3d3; padding-bottom: 2px; }
    .sheets .nav { width: 16px; color: #888; background: #aaabad; padding: 0; }
    .sheets .start { border-left: 3px solid #8fb0b5; }
    .sheets .on { background: #f7f7f7; font-weight: 700; width: 57px; padding-left: 2px; }
    .sheets .v3d { width: 68px; font-size: 11px; }
    .sheets .study { width: 108px; padding-right: 10px; font-size: 11px; }
    .sheets .edgebar { width: 13px; margin-left: auto; }
    .status { display: flex; align-items: center; height: 18px; padding: 0 2px 0 1px; font-size: 11px; white-space: nowrap; }
    .status .cell { text-align: right; }
    .c1 { width: 75px; } .c2 { width: 43px; } .c3 { width: 96px; } .c4 { width: 90px; }
    .status .def { border-right: 1px solid #ccc; padding-right: 6px; }
    .status .edit { margin-left: 7px; border-left: 1px solid #ccc; border-right: 1px solid #ccc; text-align: center; }
    .status .units { margin-left: 15px; border-left: 1px solid #ccc; padding-left: 34px; width: 163px; gap: 20px; justify-content: flex-start; }
    .taskbar { display: flex; align-items: center; height: 40px; background: #000; color: #fff; }
    .taskbar > button { width: 48px; height: 40px; }
    .apps { display: flex; gap: 9px; margin-left: 7px; }
    .apps button { width: 40px; height: 40px; border-bottom: 2px solid #76b9ed; padding-top: 2px; }
    .apps .quiet { border-bottom-color: #000; }
    .apps .on { width: 48px; background: #343434; margin-left: -4px; }
    .tray { display: flex; align-items: center; margin-left: auto; }
    .tray button { width: 24px; height: 40px; }
    .tray .lang { width: 36px; }
    .clock { width: 62px; text-align: center; line-height: 17px; font-size: 11px; margin: 0 10px 2px 0; white-space: nowrap; }
    .tray .note { width: 24px; margin-right: 16px; }
    .peek { width: 5px; height: 40px; border-left: 1px solid #555; }
  `;

  private static readonly top: [string, string][] = [
    ["fresh", "New"], ["open", "Open"], ["save", "Save"], ["print", "Print"], ["undo", "Undo"],
  ];

  private static readonly sketchers: string[][] = [
    ["line", "circle", "spline", "grid"],
    ["rect", "arc", "ellipse", "letter"],
    ["slot", "polygon", "fillet", "point"],
  ];

  private static readonly nodes: TreeNode[] = [
    { icon: "history", label: "History", branch: true },
    { icon: "sensors", label: "Sensors" },
    { icon: "notes", label: "Annotations", branch: true },
    { icon: "material", label: "Material <not specified>" },
    { icon: "plane", label: "Front Plane" },
    { icon: "plane", label: "Top Plane" },
    { icon: "plane", label: "Right Plane" },
    { icon: "origin", label: "Origin" },
    { icon: "sketch", label: "Sketch1" },
  ];

  private tool(t: Tool) {
    return html`<button class="tool ${t.kind ?? ""} ${t.w}">
      ${icon(t.icon, "s20")}<span>${t.lines.map((l, i) => html`${i ? html`<br>` : nothing}${l}`)}</span>${t.drop ? caret : nothing}
    </button>`;
  }

  private more(label: string) {
    return html`<button class="more" aria-label="${label}">${caret}</button>`;
  }

  private titleBar() {
    return html`<header class="title">
      <div class="logo">
        <svg viewBox="0 0 28 28" aria-hidden="true">
          <path d="M9 4 Q15 1 18 2 Q19 5 10 10" fill="none" stroke="#d9291c" stroke-width="1.8"/>
          <path d="M11 11 Q17 11 14 18 Q10 26 1 26 Q4 23 8 14" fill="none" stroke="#d9291c" stroke-width="1.9"/>
          <path d="M27 11 Q19 10 18 14 Q18 16 22 18 Q25 21 22 24 Q19 26 13 25" fill="none" stroke="#d9291c" stroke-width="2.4"/>
        </svg>
        <span><b>SOLID</b>WORKS</span>
      </div>
      <button class="expand" aria-label="Expand menu">${icon("play")}</button>
      ${AppRoot.top.map(([i, l]) => html`<div class="quick ${i === "undo" ? "off" : ""}">
        <button aria-label="${l}">${icon(i)}</button>${this.more(l + " options")}</div>`)}
      <div class="quick picked"><button class="pick" aria-label="Select">${icon("cursor")}</button>${this.more("Select options")}</div>
      <div class="quick">
        <button class="slim" aria-label="Rebuild">${icon("traffic")}</button>
        <button aria-label="File properties">${icon("options")}</button>
        <button class="slim" aria-label="Options">${icon("gear")}</button>${this.more("More options")}
      </div>
      <h1 class="doc">Sketch1 of Part1 *</h1>
      <div class="find">${icon("help")}<input type="text" aria-label="Search SOLIDWORKS Help" placeholder="Search SOLIDWORKS Help">${icon("lens")}${caret}</div>
      <div class="sys">
        <button aria-label="Help">${icon("query")}</button>${this.more("Help options")}
        <button aria-label="Minimize">${icon("min", "s20")}</button>
        <button aria-label="Restore">${icon("restore", "s20")}</button>
        <button aria-label="Close">${icon("close", "s20")}</button>
      </div>
    </header>`;
  }

  private ribbon() {
    return html`<nav class="ribbon" aria-label="Sketch commands">
      ${this.tool({ icon: "exit", lines: ["Exit", "Sketch"], kind: "exit", drop: true, w: "w44" })}
      ${this.tool({ icon: "smart", lines: ["Smart", "Dimension"], drop: true, w: "w65" })}
      <div class="rule"></div>
      <div class="sketchers">
        ${AppRoot.sketchers.map((row) => row.map((n, c) => html`
          <button aria-label="${n}">${icon(n, "s20")}</button>
          ${c === 3 ? nothing : n === "polygon" ? html`<i></i>` : this.more(n + " options")}`))}
      </div>
      <div class="rule"></div>
      ${this.tool({ icon: "trim", lines: ["Trim", "Entities"], drop: true, w: "w48" })}
      ${this.tool({ icon: "convert", lines: ["Convert", "Entities"], drop: true, w: "w50" })}
      ${this.tool({ icon: "offset", lines: ["Offset", "Entities"], kind: "low", w: "w48" })}
      ${this.tool({ icon: "surface", lines: ["Offset", "On", "Surface"], kind: "low off", w: "w48" })}
      <ul class="edits">
        ${[["mirror", "Mirror Entities"], ["pattern", "Linear Sketch Pattern"], ["move", "Move Entities"]].map(([i, l]) => html`
          <li><button class="main">${icon(i)}${l}</button>${i === "mirror" ? nothing : this.more(l + " options")}</li>`)}
      </ul>
      <div class="rule"></div>
      ${this.tool({ icon: "relations", lines: ["Display/Delete", "Relations"], drop: true, w: "w82" })}
      ${this.tool({ icon: "repair", lines: ["Repair", "Sketch"], kind: "low", w: "w46" })}
      <div class="rule"></div>
      ${this.tool({ icon: "snaps", lines: ["Quick", "Snaps"], kind: "off", drop: true, w: "w40" })}
      <div class="rule"></div>
      ${this.tool({ icon: "rapid", lines: ["Rapid", "Sketch"], kind: "low", w: "w44" })}
      ${this.tool({ icon: "instant", lines: ["Instant2D"], kind: "low on", w: "w60" })}
      ${this.tool({ icon: "shaded", lines: ["Shaded", "Sketch", "Contours"], kind: "low on", w: "w58" })}
    </nav>`;
  }

  private tree() {
    return html`<aside class="panel">
      <div class="grip"><i></i></div>
      <div class="modes">
        ${["part", "table", "config", "target", "ball"].map((n, i) => html`<button class="${i ? "" : "on"}" aria-label="${n}">${icon(n)}</button>`)}
        <button class="next" aria-label="More tabs"><svg width="8" height="12" viewBox="0 0 8 12"><path d="M1.5 1 L6 6 L1.5 11" fill="none" stroke="#555" stroke-width="1.8"/></svg></button>
      </div>
      <label class="filter">${icon("funnel")}<input aria-label="Filter"></label>
      <ul class="tree">
        <li class="root"><button class="item">${icon("part")}Part1&nbsp; (Default&lt;&lt;Default&gt;_Display State</button></li>
        ${AppRoot.nodes.map((n) => html`<li>
          <button class="twist" aria-label="Expand ${n.label}">${n.branch ? html`<svg width="5" height="8" viewBox="0 0 5 8"><path d="M0 0 L5 4 L0 8 Z" fill="#555"/></svg>` : nothing}</button>
          <button class="item">${icon(n.icon)}${n.label}</button></li>`)}
      </ul>
      <div class="fill"></div>
      <div class="scroll">
        <button aria-label="Scroll left"><svg width="8" height="10" viewBox="0 0 8 10"><path d="M6 1 L2 5 L6 9" fill="none" stroke="currentColor" stroke-width="1.8"/></svg></button>
        <i></i>
        <button class="fwd" aria-label="Scroll right"><svg width="8" height="10" viewBox="0 0 8 10"><path d="M2 1 L6 5 L2 9" fill="none" stroke="currentColor" stroke-width="1.8"/></svg></button>
      </div>
    </aside>`;
  }

  private canvas() {
    const views: [string, boolean][] = [
      ["zoomFit", false], ["zoomArea", false], ["previous", false], ["section", false], ["dynamic", false],
      ["orient", true], ["style", true], ["eye", true], ["appearance", false], ["scene", true], ["monitor", true],
    ];
    return html`<main class="canvas">
      <svg class="scene" viewBox="238 118 1669 888" role="img" aria-label="Sketch geometry">
        <polygon points="${DISC}" fill="#3b3b6d" fill-opacity=".4" stroke="#000" stroke-width="1.7"/>
        <polyline points="1092,320 1556,284 1543,767 1112,784" fill="none" stroke="#000" stroke-width="2"/>
        <circle cx="1092" cy="320" r="2.7"/><circle cx="1556" cy="284" r="2.5"/>
        <circle cx="1543" cy="767" r="2.5"/><circle cx="1112" cy="784" r="2.7"/>
        ${relation(1084, 328)}${relation(1104, 765)}${relation(889, 569)}
        <path d="M895.5 558 V538 M899 561.5 H904" stroke="#f00"/>
        <path d="M895.5 529 L898.2 538.5 H892.8 Z M912 561.5 L903 564 V559 Z" fill="#f00"/>
        <rect x="892.5" y="558.5" width="6" height="6" fill="#5cabff" stroke="#000"/>
        <circle cx="881.5" cy="561.5" r="3" fill="#5cabff" stroke="#000"/><path d="M881 561.5 h3" stroke="#000"/>
        <path d="M276.5 925 h3 v20 h-3z" fill="#6fb574" stroke="#1b641f"/><path d="M278 918 L282 926.5 H274 Z" fill="#177a1c"/>
        <path d="M282 946.5 h17 v3 h-17z" fill="#ea6a6a" stroke="#a01818"/><path d="M308 948 L299 952 V944 Z" fill="#c41515"/>
        <circle cx="278" cy="948" r="4.7" fill="#1c1c96"/>
        <path d="M274 907 L277.5 911.5 L281 907 M277.5 911.5 V915.5" fill="none" stroke="#0a8a0a"/>
        <path d="M308 943.5 L316 952 M316 943.5 L308 952" stroke="#f22" stroke-width="1.2"/>
      </svg>
      <div class="views">
        ${views.map(([n, d]) => html`<button aria-label="${n}">${icon(n)}</button>${d ? this.more(n + " options") : nothing}`)}
      </div>
      <div class="docwin">
        ${["dockL", "dockR", "min", "restore", "close"].map((n) => html`<button aria-label="${n} document">${icon(n, "s20")}</button>`)}
      </div>
      <svg class="confirm" viewBox="0 0 72 60" aria-hidden="true">
        <path d="M22 3 H2 V17 Q2 27 14 27 H22" fill="none" stroke="#bfd3e2" stroke-width="2"/>
        <path d="M45 17 C43 23 39 24 33 24 V18 L23 27 L32 37 V31 C40 31 46 26 45 17Z" fill="#c3dae5" stroke="#9db5c2" stroke-width="1.3"/>
        <path d="M51 34 L58 41 L65 34 L70 39 L63 46 L70 53 L65 58 L58 51 L51 58 L46 53 L53 46 L46 39 Z" fill="#e8a3a6" stroke="#d59094" stroke-width="1.3" stroke-linejoin="round"/>
      </svg>
      <button class="handle" aria-label="Collapse panel"><i></i></button>
      <p class="front">*Front</p>
      <label class="value"><input aria-label="Dimension value" value="52.837437"></label>
      <div class="tip" role="tooltip">D7@Sketch1</div>
    </main>`;
  }

  private taskbar() {
    return html`<footer class="taskbar">
      <button aria-label="Start">${icon("windows", "s20")}</button>
      <button aria-label="Search">${icon("search", "s20")}</button>
      <button aria-label="Task view">${icon("tasks", "s20")}</button>
      <div class="apps">
        <button class="quiet" aria-label="Edge">${icon("edge", "s20")}</button>
        <button aria-label="File Explorer">${icon("explorer", "s22")}</button>
        <button aria-label="Chrome">${icon("chrome", "s22")}</button>
        <button aria-label="uTorrent">${icon("utorrent", "s22")}</button>
        <button class="on" aria-label="SOLIDWORKS 2017">
          <svg width="26" height="26" viewBox="0 0 26 26">
            <path d="M13 1 L24 5 V18 L13 24 L2 18 V5 Z" fill="#b3101b"/><path d="M2 5 L13 1 L24 5 L13 9 Z" fill="#ee4a4a"/><path d="M13 9 L24 5 V18 L13 24Z" fill="#8d0b14"/>
            <text x="4" y="17" font-family="Liberation Sans" font-weight="700" font-size="11" fill="#fff">S</text>
            <text x="13" y="17" font-family="Liberation Sans" font-weight="700" font-size="11" fill="#fff">W</text>
            <text x="8" y="24" font-family="Liberation Sans" font-weight="700" font-size="8" fill="#fff">2017</text>
          </svg>
        </button>
      </div>
      <div class="tray">
        <button aria-label="Show hidden icons">${icon("chevUp", "s20")}</button>
        <button aria-label="Network">${icon("network")}</button>
        <button aria-label="Volume">${icon("sound")}</button>
        <button class="lang">ENG</button>
        <p class="clock">8:29 πμ<br>22/6/2017</p>
        <button class="note" aria-label="Notifications">${icon("notice")}</button>
        <div class="peek"></div>
      </div>
    </footer>`;
  }

  render() {
    const tabs = [
      ["Features", "w1 sm"], ["Sketch", "w2"], ["Evaluate", "w3 sm"], ["DimXpert", "w4 sm"],
      ["SOLIDWORKS Add-Ins", "w5"], ["SOLIDWORKS MBD", "w6"],
    ];
    const navs = ["M3 2 V12 M12 2 V12 L5 7 Z", "M11 2 V12 L4 7 Z", "M4 2 V12 L11 7 Z", "M12 2 V12 M3 2 V12 L10 7 Z"];
    return html`
      ${this.titleBar()}
      ${this.ribbon()}
      <div class="work">
        <div class="tabs">
          ${tabs.map(([t, w]) => html`<button class="${w} ${this.tab === t ? "on" : ""}" @click=${() => (this.tab = t)}>${t}</button>`)}
        </div>
        ${this.tree()}
        ${this.canvas()}
        <div class="edgebar"></div>
        <ul class="pane">
          ${["home", "books", "openFolder", "palette", "ball", "table", "forum"].map((n) => html`<li><button class="${n === "openFolder" ? "on" : ""}" aria-label="${n}">${icon(n)}</button></li>`)}
        </ul>
      </div>
      <div class="sheets">
        <div class="start"></div>
        ${navs.map((d) => html`<button class="nav" aria-label="Scroll sheets"><svg width="14" height="12" viewBox="0 0 15 14"><path d="${d}" fill="currentColor" stroke="currentColor"/></svg></button>`)}
        <button class="on">Model</button>
        <button class="v3d">3D Views</button>
        <button class="study">Motion Study 1</button>
        <div class="edgebar"></div>
      </div>
      <div class="status">
        <span>Part1</span><span class="fill"></span>
        <span class="cell">66.43mm</span><span class="cell c1">-91.59mm</span><span class="cell c2">0mm</span>
        <span class="cell c3 def">Fully Defined</span><span class="c4 edit">Editing Sketch1</span>
        <button class="units">MMGS <svg class="caret" viewBox="0 0 6 4"><path d="M0 4 H6 L3 0 Z" fill="currentColor"/></svg></button>
        ${icon("tag", "s16")}
      </div>
      ${this.taskbar()}`;
  }
}
